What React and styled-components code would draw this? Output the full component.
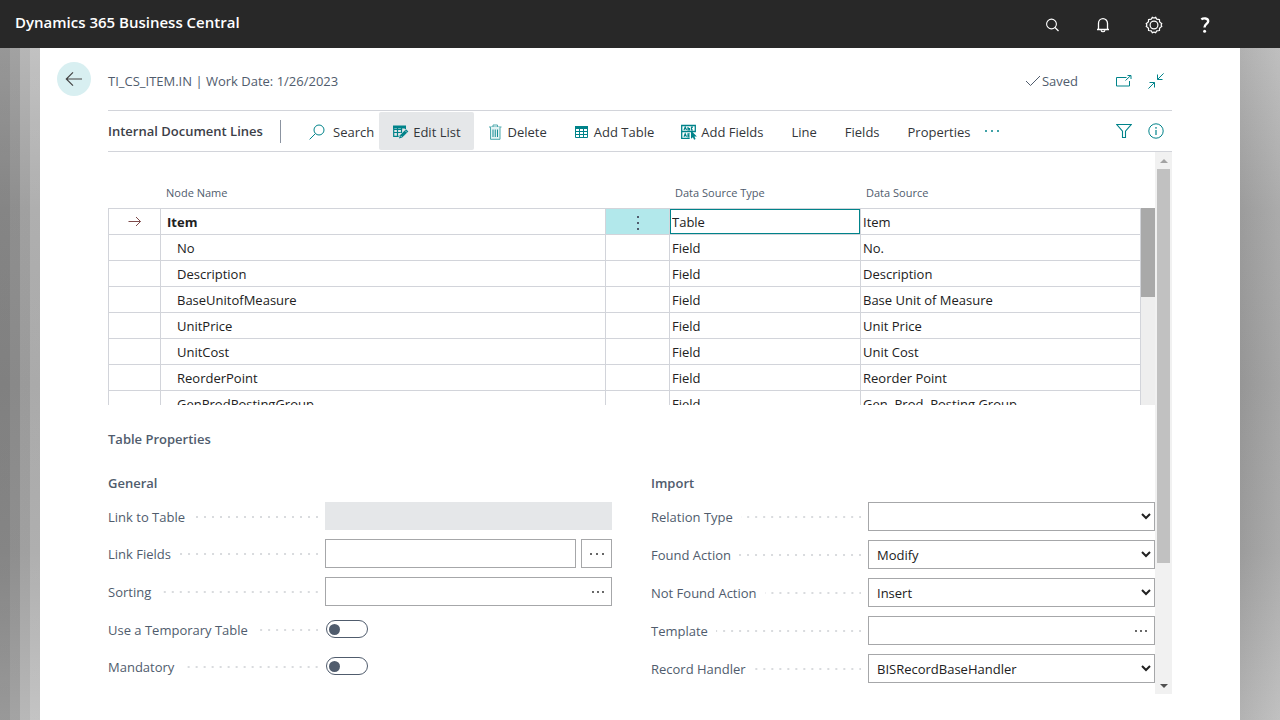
import React from "react";
import styled, { createGlobalStyle, css } from "styled-components";

const teal = "#00838a";
const slate = "#505c6d";
const line = "#d2d4da";

const GlobalStyle = createGlobalStyle`
  *, *::before, *::after { box-sizing: border-box; }
  body {
    margin: 0;
    font-family: "Open Sans", "Noto Sans", sans-serif;
    font-size: 13px;
    line-height: 18px;
    color: #212121;
  }
  button, input, select { font: inherit; color: inherit; }
`;

const Page = styled.div`
  min-height: 100vh;
  display: flex;
  flex-direction: column;
`;

const AppBar = styled.header`
  height: 48px;
  padding: 0 60px 4px 15px;
  display: flex;
  align-items: center;
  justify-content: space-between;
  background: #282828;
  color: #fff;
`;

const Product = styled.span`
  font-size: 15px;
  font-weight: 600;
`;

const AppActions = styled.nav`
  display: flex;
  gap: 20px;
  padding-top: 6px;
`;

const IconButton = styled.button`
  width: ${(p) => p.$size || 31}px;
  height: ${(p) => p.$size || 31}px;
  padding: 0;
  border: 0;
  background: none;
  display: flex;
  align-items: center;
  justify-content: center;
  color: ${(p) => p.$color || "inherit"};
  cursor: pointer;
`;

const Backdrop = styled.div`
  flex: 1;
  padding: 0 40px;
  display: flex;
  background:
    linear-gradient(90deg, rgba(0, 0, 0, 0.18) 10px, rgba(0, 0, 0, 0.12) 10px 20px, rgba(0, 0, 0, 0.01) 20px 30px, rgba(255, 255, 255, 0.14) 30px 40px, transparent 40px) left / 50% 100% no-repeat,
    linear-gradient(90deg, transparent calc(100% - 40px), rgba(0, 0, 0, 0.04) calc(100% - 40px), rgba(255, 255, 255, 0.1)) right / 50% 100% no-repeat,
    linear-gradient(180deg, #b8b8b8 0, #a2a2a2 24%, #9c9c9c 50%, #a2a2a2 75%, #bababa 100%);
`;

const Sheet = styled.main`
  flex: 1;
  min-width: 0;
  padding: 0 68px 26px 17px;
  background: #fff;
  display: grid;
  grid-template-columns: 51px minmax(0, 1fr);
  grid-template-rows: 62px auto 1fr;
`;

const BackButton = styled.button`
  width: 34px;
  height: 34px;
  margin-top: 14px;
  padding: 0;
  border: 0;
  border-radius: 50%;
  background: #d8eff1;
  color: #444;
  display: flex;
  align-items: center;
  justify-content: center;
  cursor: pointer;
`;

const TitleBar = styled.div`
  display: flex;
  align-items: center;
  justify-content: space-between;
  padding: 3px 8px 0 0;
  color: ${slate};
`;

const Title = styled.h1`
  margin: 0;
  font-size: 13px;
  font-weight: 400;
`;

const TitleTools = styled.div`
  display: flex;
  align-items: center;
  gap: 16px;
`;

const Saved = styled.span`
  display: flex;
  align-items: center;
  gap: 1px;
  margin-right: 22px;
`;

const Content = styled.div`
  grid-column: 2;
  min-width: 0;
`;

const Toolbar = styled.div`
  height: 42px;
  padding-right: 8px;
  border-top: 1px solid ${line};
  border-bottom: 1px solid ${line};
  display: flex;
  align-items: center;
  white-space: nowrap;
`;

const ToolbarTitle = styled.h2`
  margin: 0;
  width: 173px;
  border-right: 1px solid #8b93a0;
  font-size: 13px;
  font-weight: 600;
  line-height: 23px;
  color: #3c4048;
`;

const commandSpacing = {
  search: css`padding: 2px 5px 0 28px; gap: 8px;`,
  icon: css`padding: 2px 13px 0 14px; gap: 4px;`,
  text: css`padding: 2px 13px 0 15px;`,
};

const Command = styled.button`
  height: 38px;
  border: 0;
  border-radius: 2px;
  ${(p) => commandSpacing[p.$kind]}
  background: ${(p) => (p.$active ? "#e5e7e9" : "none")};
  display: flex;
  align-items: center;
  color: #33363a;
  cursor: pointer;
  svg { color: ${teal}; flex: none; }
`;

const ToolbarEnd = styled.div`
  margin-left: auto;
  display: flex;
  gap: 16px;
`;

const ScrollPanel = styled.div`
  display: grid;
  grid-template-columns: minmax(0, 1fr) 17px;
`;

const PanelBody = styled.div`
  padding-bottom: 11px;
`;

const PageScroll = styled.div`
  padding: 0 2px;
  background: #f1f1f1;
  display: flex;
  flex-direction: column;
`;

const ScrollArrow = styled.span`
  height: 17px;
  display: flex;
  align-items: center;
  justify-content: center;
  &::before {
    content: "";
    border: 4px solid transparent;
    ${(p) =>
      p.$up
        ? css`border-top: 0; border-bottom-color: #a3a3a3;`
        : css`border-bottom: 0; border-top-color: #505050;`}
  }
`;

const ScrollTrack = styled.div`
  flex: 1;
`;

const ScrollThumb = styled.div`
  height: ${(p) => p.$share}%;
  background: ${(p) => (p.$dark ? "#a9a9a9" : "#c1c1c1")};
`;

const GridFrame = styled.div`
  height: 253px;
  overflow: hidden;
  display: grid;
  grid-template-columns: minmax(0, 1fr) 14px;
`;

const GridScroll = styled.div`
  height: 197px;
  margin-top: 56px;
  background: #eee;
`;

const LinesTable = styled.table`
  width: 100%;
  table-layout: fixed;
  border-collapse: separate;
  border-spacing: 0;
`;

const HeadCell = styled.th`
  height: 56px;
  padding: 32px 0 0 6px;
  vertical-align: top;
  text-align: left;
  font-size: 11px;
  line-height: 18px;
  font-weight: 400;
  color: ${slate};
`;

const Cell = styled.td`
  height: 26px;
  padding: 0 0 0 ${(p) => p.$pad || 0}px;
  border-top: 1px solid ${line};
  border-left: 1px solid ${line};
  background: ${(p) => (p.$lit ? "#b2e8eb" : "#fff")};
  font-weight: ${(p) => (p.$bold ? 700 : 400)};
  line-height: 18px;
  white-space: nowrap;
  overflow: hidden;
  &:last-child { border-right: 1px solid ${line}; }
`;

const CellInput = styled.input`
  display: block;
  width: 100%;
  height: 25px;
  padding: 0 1px;
  border: 1px solid ${teal};
  border-radius: 0;
  outline: 0;
  background: #fff;
`;

const CellButton = styled.button`
  width: 100%;
  height: 25px;
  padding: 0;
  border: 0;
  background: none;
  display: flex;
  align-items: center;
  justify-content: center;
  color: ${slate};
`;

const Heading = styled.h2`
  margin: 25px 0 26px;
  font-size: 13px;
  line-height: 18px;
  font-weight: 600;
  color: ${slate};
`;

const Columns = styled.div`
  display: grid;
  grid-template-columns: 1fr 1fr;
  gap: 39px;
`;

const Group = styled.fieldset`
  min-width: 0;
  margin: 0;
  padding: 0;
  border: 0;
  display: flex;
  flex-direction: column;
  gap: 9px;
`;

const GroupName = styled.legend`
  padding: 0;
  margin-bottom: 10px;
  font-weight: 600;
  color: ${slate};
`;

const FieldRow = styled.div`
  min-height: 28px;
  display: grid;
  grid-template-columns: 217px minmax(0, 1fr);
  align-items: center;
`;

const FieldLabel = styled.label`
  padding: 1px 7px 0 0;
  display: flex;
  align-items: center;
  gap: 8px;
  white-space: nowrap;
  color: ${slate};
  &::after {
    content: "";
    flex: 1;
    height: 2px;
    background: linear-gradient(90deg, transparent 6px, #d9dbde 6px) right / 8px 2px repeat-x;
  }
`;

const box = css`
  height: 29px;
  border: 1px solid #a6a7a9;
  border-radius: 0;
  background: #fff;
`;

const TextBox = styled.input`
  ${box}
  width: 100%;
  min-width: 0;
  padding: 0 8px;
  &:disabled { height: 28px; border: 0; background: #e5e7e9; }
`;

const Dropdown = styled.select`
  ${box}
  width: 100%;
  padding: 0 4px;
`;

const Lookup = styled.div`
  ${box}
  display: flex;
  input { flex: 1; height: 27px; border: 0; }
  button { width: 27px; height: 27px; }
`;

const AssistField = styled.div`
  display: flex;
  gap: 5px;
`;

const AssistButton = styled.button`
  ${box}
  flex: none;
  width: 31px;
  padding: 0;
  display: flex;
  align-items: center;
  justify-content: center;
`;

const Toggle = styled.input`
  appearance: none;
  width: 42px;
  height: 18px;
  margin: 0 0 0 1px;
  padding: 0 2px;
  border: 1px solid ${slate};
  border-radius: 9px;
  display: flex;
  align-items: center;
  &::before {
    content: "";
    width: 11px;
    height: 11px;
    border-radius: 50%;
    background: ${slate};
  }
  &:checked { justify-content: flex-end; }
`;

function Icon({ w = 16, h = 16, children, ...rest }) {
  return (
    <svg width={w} height={h} viewBox={`0 0 ${w} ${h}`} fill="none" stroke="currentColor" aria-hidden="true" {...rest}>
      {children}
    </svg>
  );
}

const Dots = ({ step = 5, r = 1, color = "currentColor" }) => (
  <Icon w={16} h={4}>
    {[-1, 0, 1].map((n) => (
      <circle key={n} cx={8 + n * step} cy="2" r={r} fill={color} stroke="none" />
    ))}
  </Icon>
);

const SearchIcon = () => (
  <Icon>
    <circle cx="10" cy="6" r="5" />
    <path d="M6.4 9.6 0.6 15.4" />
  </Icon>
);

const EditListIcon = () => (
  <Icon>
    <path d="M0 1.500h13v3H0z" fill="currentColor" stroke="none" />
    <path d="M.7 2v10.300h5M.7 5.500h8.500M.7 8.500h7M4.500 4v8M8.500 4v5M12.400 2v3" strokeWidth="1.200" />
    <path d="M6 14.500l.9-3.200L13 5.200l2.300 2.300-6.100 6.100z" fill="currentColor" stroke="none" />
    <path d="M7.500 11.800l1.300 1.300M12 6.500l2 2" stroke="#e5e7e9" strokeWidth=".7" />
  </Icon>
);

const TrashIcon = () => (
  <Icon>
    <path d="M1 3h12.500M5 3V1h4.500v2" stroke="#4da8ad" />
    <path d="M2.500 3v12.300h9.500V3" fill="#e3f3f4" stroke="#4da8ad" />
    <path d="M5 5.500v7.500M7.250 5.500v7.500M9.500 5.500v7.500" strokeWidth=".9" />
  </Icon>
);

const TableIcon = () => (
  <Icon>
    <path d="M1 2h13v3H1z" fill="currentColor" stroke="none" />
    <path d="M1.500 3v10.500h12V3M1 7.500h13M1 10.500h13M5.500 4v9.500M9.500 4v9.500" />
  </Icon>
);

const FieldsIcon = () => (
  <Icon>
    <path d="M.7 1.500h13.600v6H.7zM.7 7.500v6.800h8M.7 7.500h8.500" strokeWidth="1.300" />
    <path d="M3 6l1.200-3L5.500 6M7 3v3h1.500V4.500H7M12 3.200h-1.500V6H12" strokeWidth="1.200" />
    <path d="M3 12.800l1.200-3 1.300 3M8.700 9.800H7v3h1.700M7 11.300h1.500" strokeWidth="1.200" />
    <path d="M10 6.500v8.300l1.900-1.600 1.200 2.600 1.500-.7-1.200-2.500h2.500z" fill="currentColor" stroke="none" />
  </Icon>
);

const AppSearchIcon = () => (
  <Icon>
    <circle cx="7.500" cy="7" r="4.900" strokeWidth="1.100" />
    <path d="M11 10.500l3.500 3.500" strokeWidth="1.200" />
  </Icon>
);

const BellIcon = () => (
  <Icon>
    <path d="M3.500 12.500V6.200a4.500 4.500 0 0 1 9 0v6.300M2 12.500h12" strokeWidth="1.300" />
    <path d="M6 13.300a2.100 2.100 0 0 0 4 0" strokeWidth="1.200" />
  </Icon>
);

const GearIcon = () => (
  <Icon w={18} h={18}>
    <path
      d="M7.300 1.200Q9 2.600 10.700 1.200L11.600 3.100Q13.200 3.400 14.500 3.500L14.500 5.600Q15.400 7 16.800 7.500Q15.400 9 16.800 10.500Q15.400 11 14.500 12.400L14.500 14.500Q13.200 14.600 11.600 14.900L10.700 16.800Q9 15.400 7.300 16.800L6.400 14.900Q4.800 14.600 3.500 14.500L3.500 12.400Q2.600 11 1.200 10.500Q2.600 9 1.200 7.500Q2.600 7 3.500 5.600L3.500 3.500Q4.800 3.400 6.400 3.100Z"
      strokeLinejoin="round"
      strokeWidth="1.200"
    />
    <circle cx="9" cy="9" r="3.900" strokeWidth="1.200" />
  </Icon>
);

const HelpIcon = () => (
  <Icon w={12} h={18}>
    <path d="M2.300 3.400C4.300 1.900 9.200 1.800 9.200 5.200c0 2.700-3.700 2.900-3.700 6.300" strokeWidth="2.400" />
    <circle cx="5.600" cy="15.300" r="1.500" fill="currentColor" stroke="none" />
  </Icon>
);

const BackIcon = () => (
  <Icon w={18} h={16}>
    <path d="M17 8H1.500M8 1.300 1.300 8 8 14.700" strokeWidth="1.200" />
  </Icon>
);

const PopOutIcon = () => (
  <Icon>
    <path d="M10.500 4.500H.5v8.500h13V8M9.500 7.500l5.500-5.200M11.500 2.500h3.500v3.500" />
  </Icon>
);

const CollapseIcon = () => (
  <Icon>
    <path d="M15.600.4 9.600 6.400M9.500 1.500v5h5M.4 15.600l6-6M1.500 9.500h5v5" />
  </Icon>
);

const FilterIcon = () => (
  <Icon>
    <path d="M.8 1.500h14.400L9.500 8.200v6.300h-3V8.200z" strokeWidth="1.100" />
  </Icon>
);

const InfoIcon = () => (
  <Icon>
    <circle cx="8" cy="8" r="7.200" />
    <path d="M8 7v5" strokeWidth="1.200" />
    <circle cx="8" cy="4.900" r=".8" fill="currentColor" stroke="none" />
  </Icon>
);

const commands = [
  { name: "Search", icon: <SearchIcon />, kind: "search" },
  { name: "Edit List", icon: <EditListIcon />, kind: "icon", active: true },
  { name: "Delete", icon: <TrashIcon />, kind: "icon" },
  { name: "Add Table", icon: <TableIcon />, kind: "icon" },
  { name: "Add Fields", icon: <FieldsIcon />, kind: "icon" },
  { name: "Line", kind: "text" },
  { name: "Fields", kind: "text" },
  { name: "Properties", kind: "text" },
];

const lines = [
  ["No", "No."],
  ["Description", "Description"],
  ["BaseUnitofMeasure", "Base Unit of Measure"],
  ["UnitPrice", "Unit Price"],
  ["UnitCost", "Unit Cost"],
  ["ReorderPoint", "Reorder Point"],
  ["GenProdPostingGroup", "Gen. Prod. Posting Group"],
];

function Field({ id, label, children }) {
  return (
    <FieldRow>
      <FieldLabel htmlFor={id}>{label}</FieldLabel>
      {children}
    </FieldRow>
  );
}

function SelectField({ id, label, value }) {
  return (
    <Field id={id} label={label}>
      <Dropdown id={id} defaultValue={value}>
        <option value={value}>{value}</option>
      </Dropdown>
    </Field>
  );
}

function LookupField({ id, label }) {
  return (
    <Field id={id} label={label}>
      <Lookup>
        <TextBox id={id} type="text" />
        <IconButton type="button" aria-label={`Choose ${label}`}>
          <Dots r={0.9} color="#222" />
        </IconButton>
      </Lookup>
    </Field>
  );
}

export default function App() {
  return (
    <Page>
      <GlobalStyle />
      <AppBar>
        <Product>Dynamics 365 Business Central</Product>
        <AppActions aria-label="Application">
          <IconButton aria-label="Search"><AppSearchIcon /></IconButton>
          <IconButton aria-label="Notifications"><BellIcon /></IconButton>
          <IconButton aria-label="Settings"><GearIcon /></IconButton>
          <IconButton aria-label="Help"><HelpIcon /></IconButton>
        </AppActions>
      </AppBar>
      <Backdrop>
        <Sheet>
          <BackButton aria-label="Back"><BackIcon /></BackButton>
          <TitleBar>
            <Title>TI_CS_ITEM.IN | Work Date: 1/26/2023</Title>
            <TitleTools>
              <Saved>
                <Icon><path d="M1 8l4.500 4.500L15 3" /></Icon>
                Saved
              </Saved>
              <IconButton $size={16} $color={teal} aria-label="Open in new window"><PopOutIcon /></IconButton>
              <IconButton $size={16} $color={teal} aria-label="Collapse"><CollapseIcon /></IconButton>
            </TitleTools>
          </TitleBar>
          <Content>
            <Toolbar>
              <ToolbarTitle>Internal Document Lines</ToolbarTitle>
              {commands.map((c) => (
                <Command key={c.name} type="button" $active={c.active} $kind={c.kind}>
                  {c.icon}
                  {c.name}
                </Command>
              ))}
              <IconButton $size={18} $color={teal} aria-label="More options"><Dots step={6} /></IconButton>
              <ToolbarEnd>
                <IconButton $size={16} $color={teal} aria-label="Filter"><FilterIcon /></IconButton>
                <IconButton $size={16} $color={teal} aria-label="Details"><InfoIcon /></IconButton>
              </ToolbarEnd>
            </Toolbar>
            <ScrollPanel>
              <PanelBody>
                <GridFrame>
                  <LinesTable>
                    <colgroup>
                      <col style={{ width: 52 }} />
                      <col />
                      <col style={{ width: 64 }} />
                      <col style={{ width: 191 }} />
                      <col style={{ width: 281 }} />
                    </colgroup>
                    <thead>
                      <tr>
                        <HeadCell aria-label="Current" />
                        <HeadCell>Node Name</HeadCell>
                        <HeadCell aria-label="Actions" />
                        <HeadCell>Data Source Type</HeadCell>
                        <HeadCell>Data Source</HeadCell>
                      </tr>
                    </thead>
                    <tbody>
                      <tr>
                        <Cell>
                          <CellButton aria-label="Select row">
                            <Icon w={14} h={12} style={{ color: "#7d4a4a" }}>
                              <path d="M.5 5.500h12M8 1l4.500 4.500L8 10" />
                            </Icon>
                          </CellButton>
                        </Cell>
                        <Cell $pad={6} $bold>Item</Cell>
                        <Cell $lit>
                          <CellButton aria-label="Row actions">
                            <Icon w={4} h={16}>
                              <path d="M1 2h2v2H1zM1 8h2v2H1zM1 14h2v2H1z" fill="currentColor" stroke="none" />
                            </Icon>
                          </CellButton>
                        </Cell>
                        <Cell><CellInput aria-label="Data Source Type" defaultValue="Table" /></Cell>
                        <Cell $pad={2}>Item</Cell>
                      </tr>
                      {lines.map(([node, source]) => (
                        <tr key={node}>
                          <Cell />
                          <Cell $pad={16}>{node}</Cell>
                          <Cell />
                          <Cell $pad={2}>Field</Cell>
                          <Cell $pad={2}>{source}</Cell>
                        </tr>
                      ))}
                    </tbody>
                  </LinesTable>
                  <GridScroll>
                    <ScrollThumb $share={45} $dark />
                  </GridScroll>
                </GridFrame>
                <Heading>Table Properties</Heading>
                <Columns>
                  <Group>
                    <GroupName>General</GroupName>
                    <Field id="link-table" label="Link to Table">
                      <TextBox id="link-table" type="text" disabled />
                    </Field>
                    <Field id="link-fields" label="Link Fields">
                      <AssistField>
                        <TextBox id="link-fields" type="text" />
                        <AssistButton type="button" aria-label="Edit Link Fields">
                          <Dots step={6} color="#333" />
                        </AssistButton>
                      </AssistField>
                    </Field>
                    <LookupField id="sorting" label="Sorting" />
                    <Field id="temporary" label="Use a Temporary Table">
                      <Toggle id="temporary" type="checkbox" />
                    </Field>
                    <Field id="mandatory" label="Mandatory">
                      <Toggle id="mandatory" type="checkbox" />
                    </Field>
                  </Group>
                  <Group>
                    <GroupName>Import</GroupName>
                    <SelectField id="relation" label="Relation Type" value="" />
                    <SelectField id="found" label="Found Action" value="Modify" />
                    <SelectField id="not-found" label="Not Found Action" value="Insert" />
                    <LookupField id="template" label="Template" />
                    <SelectField id="handler" label="Record Handler" value="BISRecordBaseHandler" />
                  </Group>
                </Columns>
              </PanelBody>
              <PageScroll>
                <ScrollArrow $up />
                <ScrollTrack><ScrollThumb $share={77.5} /></ScrollTrack>
                <ScrollArrow />
              </PageScroll>
            </ScrollPanel>
          </Content>
        </Sheet>
      </Backdrop>
    </Page>
  );
}
